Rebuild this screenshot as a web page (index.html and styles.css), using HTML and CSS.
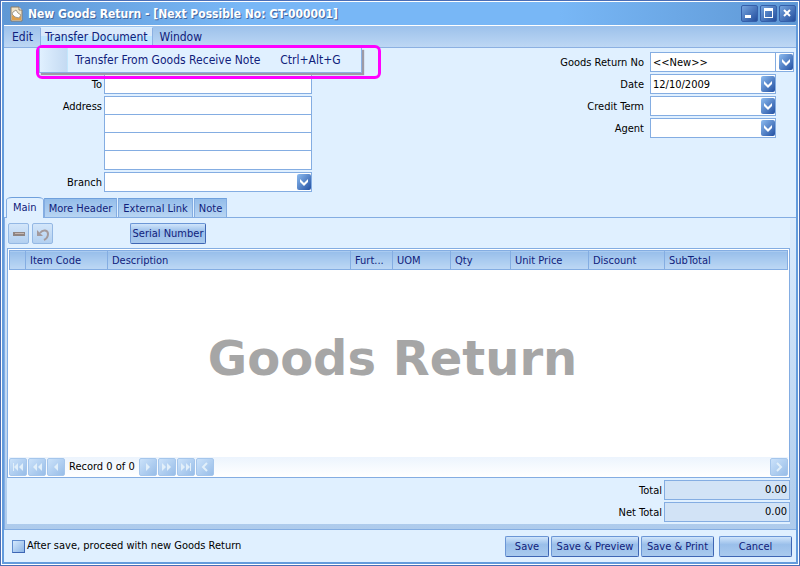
FILE: index.html
```
<!DOCTYPE html>
<html lang="en">
<head>
    <meta charset="UTF-8">
    <meta name="viewport" content="width=device-width, initial-scale=1.0">
    <title>New Goods Return</title>
    <link rel="stylesheet" href="styles.css">
</head>
<body>
    <svg class="defs" aria-hidden="true">
        <linearGradient id="blue" x1="0" y1="0" x2="1" y2="1">
            <stop offset="0" stop-color="#8dbcf0"/>
            <stop offset="1" stop-color="#2350a2"/>
        </linearGradient>
        <symbol id="drop" viewBox="0 0 14 16">
            <rect width="14" height="16" rx="2" fill="url(#blue)"/>
            <path d="M3 5l4 4 4-4v3l-4 4-4-4z" fill="#fff"/>
        </symbol>
    </svg>

    <div class="window">
        <header class="title-bar">
            <svg class="app-icon" width="13" height="16" viewBox="0 0 13 16">
                <path d="M1 1h8l3 3v11H1z" fill="#f1e4c8" stroke="#8b7c68"/>
                <path d="M9 1v3h3" fill="#fff" stroke="#8b7c68"/>
                <path d="M2 9l4 2 5-2v5H2z" fill="#dfa04c"/>
                <path d="M3 6l3-2 2 3 3 2-2 3-4-1-3-3z" fill="#fff" stroke="#a39a8a"/>
            </svg>
            <h1>New Goods Return - [Next Possible No: GT-000001]</h1>
            <div class="window-buttons">
                <button aria-label="Minimize"><svg width="16" height="16"><path d="M4 10h6v3H4z" fill="#fff"/></svg></button>
                <button aria-label="Maximize"><svg width="16" height="16"><path d="M4 3h9v10H4zM5 6v6h7V6z" fill="#fff" fill-rule="evenodd"/></svg></button>
                <button aria-label="Close"><svg width="16" height="16"><path d="M5 5l6 6M11 5l-6 6" stroke="#fff" stroke-width="2"/></svg></button>
            </div>
        </header>

        <nav class="menu-bar">
            <button>Edit</button>
            <div class="menu">
                <button class="open">Transfer Document</button>
                <div class="highlight">
                    <div class="popup">
                        <button><span>Transfer From Goods Receive Note</span><span>Ctrl+Alt+G</span></button>
                    </div>
                </div>
            </div>
            <button>Window</button>
        </nav>

        <div class="header-form">
            <div class="supplier">
                <label for="to">To</label>
                <input type="text" id="to">
                <label for="address">Address</label>
                <div class="address">
                    <input type="text" id="address">
                    <input type="text" aria-label="Address line 2">
                    <input type="text" aria-label="Address line 3">
                    <input type="text" aria-label="Address line 4">
                </div>
                <label for="branch">Branch</label>
                <div class="select">
                    <select id="branch"><option></option></select>
                    <svg width="14" height="16"><use href="#drop"/></svg>
                </div>
            </div>
            <div class="document">
                <label for="docNo">Goods Return No</label>
                <div class="select wide">
                    <select id="docNo"><option>&lt;&lt;New&gt;&gt;</option></select>
                    <svg width="14" height="16"><use href="#drop"/></svg>
                </div>
                <label for="date">Date</label>
                <div class="select">
                    <select id="date"><option>12/10/2009</option></select>
                    <svg width="14" height="16"><use href="#drop"/></svg>
                </div>
                <label for="term">Credit Term</label>
                <div class="select">
                    <select id="term"><option></option></select>
                    <svg width="14" height="16"><use href="#drop"/></svg>
                </div>
                <label for="agent">Agent</label>
                <div class="select">
                    <select id="agent"><option></option></select>
                    <svg width="14" height="16"><use href="#drop"/></svg>
                </div>
            </div>
        </div>

        <div class="tabs">
            <button class="active">Main</button>
            <button>More Header</button>
            <button>External Link</button>
            <button>Note</button>
        </div>

        <main class="panel">
            <div class="page">
                <div class="toolbar">
                    <button class="tool" aria-label="Delete row">
                        <svg width="14" height="14"><path d="M1 5h12v4H1z" fill="#8f8583"/><path d="M3 6h9v1H3z" fill="#c5b7b2"/></svg>
                    </button>
                    <button class="tool" aria-label="Undo">
                        <svg width="14" height="14"><path d="M4 6c3-4 8-3 8 1 0 3-2 5-4 6" fill="none" stroke="#a39a9d" stroke-width="2"/><path d="M1 3v6h6z" fill="#a39a9d"/></svg>
                    </button>
                    <button class="button serial">Serial Number</button>
                </div>

                <div class="grid">
                    <table>
                        <colgroup>
                            <col class="c-mark"><col class="c-code"><col class="c-desc"><col class="c-further"><col class="c-uom"><col class="c-qty"><col class="c-price"><col class="c-discount"><col class="c-subtotal">
                        </colgroup>
                        <thead>
                            <tr>
                                <th></th>
                                <th>Item Code</th>
                                <th>Description</th>
                                <th>Furt...</th>
                                <th>UOM</th>
                                <th>Qty</th>
                                <th>Unit Price</th>
                                <th>Discount</th>
                                <th>SubTotal</th>
                            </tr>
                        </thead>
                    </table>
                    <div class="watermark">Goods Return</div>
                    <div class="navigator">
                        <button aria-label="First"><svg width="12" height="10"><path d="M1 1h1v8H1zM6 1v8L2 5zM11 1v8L7 5z"/></svg></button>
                        <button aria-label="Previous page"><svg width="12" height="10"><path d="M6 1v8L2 5zM11 1v8L7 5z"/></svg></button>
                        <button aria-label="Previous"><svg width="12" height="10"><path d="M8 1v8L4 5z"/></svg></button>
                        <span>Record 0 of 0</span>
                        <button aria-label="Next"><svg width="12" height="10"><path d="M4 1v8l4-4z"/></svg></button>
                        <button aria-label="Next page"><svg width="12" height="10"><path d="M1 1v8l4-4zM6 1v8l4-4z"/></svg></button>
                        <button aria-label="Last"><svg width="12" height="10"><path d="M1 1v8l4-4zM6 1v8l4-4zM10 1h1v8h-1z"/></svg></button>
                        <button aria-label="Scroll left"><svg width="12" height="10"><path class="arrow" d="M8 1L4 5l4 4"/></svg></button>
                        <button class="scroll-right" aria-label="Scroll right"><svg width="12" height="10"><path class="arrow" d="M4 1l4 4-4 4"/></svg></button>
                    </div>
                </div>

                <div class="totals">
                    <label for="total">Total</label>
                    <input type="text" id="total" value="0.00" readonly>
                    <label for="netTotal">Net Total</label>
                    <input type="text" id="netTotal" value="0.00" readonly>
                </div>
            </div>
        </main>

        <footer class="actions">
            <input type="checkbox" id="proceed">
            <label for="proceed">After save, proceed with new Goods Return</label>
            <button class="button save">Save</button>
            <button class="button preview">Save &amp; Preview</button>
            <button class="button print">Save &amp; Print</button>
            <button class="button cancel">Cancel</button>
        </footer>
    </div>
</body>
</html>
```
FILE: styles.css
```
* {
    box-sizing: border-box;
}
body {
    margin: 0;
    font-family: Tahoma, 'DejaVu Sans Condensed', 'DejaVu Sans', sans-serif;
    font-size: 11px;
    line-height: 14px;
    color: #000;
}
button, input, select {
    font: inherit;
    color: inherit;
    margin: 0;
    padding: 0;
    border: 0;
    border-radius: 0;
}
button {
    background: none;
    color: #10217b;
    white-space: nowrap;
}
svg {
    display: block;
}
.defs {
    position: absolute;
    width: 0;
    height: 0;
}

/* window frame */
.window {
    display: flex;
    flex-direction: column;
    min-height: 100vh;
    padding: 2px 4px 3px;
    border: 1px solid #4a6db5;
    background: #e0f0ff;
    box-shadow: inset 0 0 0 1px #fff, inset 0 0 0 3px #639bdc;
}
.title-bar {
    display: flex;
    align-items: center;
    height: 23px;
    margin: -1px -2px 0;
    padding: 0 1px 0 7px;
    background: linear-gradient(90deg, #5f98d5, #78b7f6 30%, #78b7f6 70%, #5f98d5);
}
.title-bar h1 {
    flex: 1;
    margin: 0 0 0 5px;
    font-size: 12px;
    line-height: 16px;
    color: #fff;
    text-shadow: 1px 1px 0 #44669c;
    white-space: nowrap;
}
.window-buttons {
    display: flex;
    gap: 2px;
}
.window-buttons button {
    width: 17px;
    height: 17px;
    border: 1px solid #3560ab;
    border-radius: 2px;
    background: linear-gradient(135deg, #75a4df, #234e9d);
}
.window-buttons svg {
    margin: -1px 0 0 -1px;
}

/* menu */
.menu-bar {
    display: flex;
    height: 23px;
    padding: 1px 0 0 1px;
    margin: 0 -1px;
    border-top: 1px solid #fff;
    border-bottom: 1px solid #8bb0e2;
    background: linear-gradient(#9cc1eb, #bdd7f4);
}
.menu-bar button {
    height: 19px;
    padding: 0 7px;
    font-size: 12px;
}
.menu {
    position: relative;
}
.menu-bar .open {
    padding: 0 4px;
    border: 1px solid #8bb0e2;
    border-top-color: #d9efff;
    background: linear-gradient(#d9e9fb 45%, #bfe5ff 45%);
}
.highlight {
    position: absolute;
    z-index: 1;
    top: 18px;
    left: -4px;
    width: 345px;
    height: 34px;
    border: 3px solid #f0f;
    border-radius: 6px;
}
.popup {
    width: 323px;
    height: 25px;
    border: 1px solid #8bb0e2;
    border-top: 0;
    background: linear-gradient(90deg, #e0f0ff, #c4daf2 27px, #c2e6fc 27px, #c2e6fc 28px, #e0f0ff 28px);
    box-shadow: 2px 2px 1px #9d9aa6;
}
.popup button {
    display: flex;
    gap: 20px;
    padding: 5px 0 0 35px;
}

/* document header */
.header-form {
    display: flex;
    justify-content: space-between;
    padding: 4px 1px 5px 0;
}
.supplier, .document {
    display: grid;
    gap: 2px;
    align-content: start;
}
.supplier {
    grid-template-columns: 97px 208px;
    padding-top: 22px;
}
.supplier label, .document label {
    padding-top: 1px;
    line-height: 19px;
    text-align: right;
}
.document {
    grid-template-columns: 100px 144px;
    column-gap: 6px;
}
.supplier input, .select select {
    width: 100%;
    height: 20px;
    padding: 1px 2px 0;
    border: 1px solid #84ade2;
    background: #fff;
    appearance: none;
}
.address {
    display: flex;
    flex-direction: column;
}
.address input:not(:last-child) {
    margin-bottom: -2px;
}
.select {
    display: grid;
    align-items: center;
    justify-items: end;
}
.select > * {
    grid-area: 1 / 1;
}
.select svg {
    margin-right: 1px;
    pointer-events: none;
}
.document .select {
    width: 126px;
}
.document .wide {
    width: 144px;
}
.wide select {
    background: linear-gradient(#84ade2, #84ade2) right 17px top / 1px 100% no-repeat #fff;
}

/* tabs */
.tabs {
    position: relative;
    display: flex;
    align-items: flex-end;
    gap: 1px;
    margin-bottom: -1px;
    padding-left: 1px;
}
.tabs button {
    height: 20px;
    padding: 1px 4px 0;
    border: 1px solid #84ade2;
    border-top-color: #6fa0dc;
    background: linear-gradient(#94bdea, #b8d5f3);
}
.tabs .active {
    height: 21px;
    padding: 0 6px;
    margin-right: -1px;
    border-bottom: 0;
    border-radius: 6px 6px 0 0 / 3px 3px 0 0;
    background: #e0f0ff;
}
.panel {
    flex: 1;
    display: flex;
    margin: 0 -1px;
    padding: 0 6px 5px 2px;
    border: 1px solid #84ade2;
    border-width: 1px 0 1px 1px;
    background: linear-gradient(#dcecfd, #aecbec);
}
.page {
    flex: 1;
    display: flex;
    flex-direction: column;
    background: #e0f0ff;
}
.toolbar {
    display: flex;
    gap: 3px;
    padding: 5px 1px 4px;
}
.button, .tool {
    height: 21px;
    border: 1px solid #6b96d6;
    border-right-color: #3e66b4;
    border-bottom-color: #3e66b4;
    border-radius: 2px;
    background: linear-gradient(#d0e5fb, #9abfea 40%, #a9caee);
}
.button {
    padding-top: 1px;
}
.tool {
    display: grid;
    place-items: center;
    width: 21px;
    border-color: #94b8e4;
    background: linear-gradient(#d3e6fa, #b3d0f0);
}
.serial {
    width: 76px;
    margin-left: 74px;
}

/* item grid */
.grid {
    flex: 1;
    display: flex;
    flex-direction: column;
    padding: 1px;
    border: 1px solid #84ade2;
    background: #fff;
}
.grid table {
    width: 100%;
    table-layout: fixed;
    border-collapse: collapse;
}
.grid th {
    height: 19px;
    padding: 2px 4px 0;
    border: 1px solid #84ade2;
    background: linear-gradient(#97beea, #bdd8f5);
    color: #10217b;
    font-weight: normal;
    text-align: left;
    white-space: nowrap;
}
.c-mark { width: 16px; }
.c-code { width: 82px; }
.c-desc { width: auto; }
.c-further { width: 42px; }
.c-uom { width: 58px; }
.c-qty { width: 60px; }
.c-price { width: 78px; }
.c-discount { width: 76px; }
.c-subtotal { width: 123px; }
.watermark {
    flex: 1;
    display: grid;
    place-items: center;
    padding: 0 12px 12px 0;
    font-family: 'DejaVu Sans', sans-serif;
    font-size: 48px;
    line-height: 56px;
    font-weight: bold;
    color: #a6a6a6;
}
.navigator {
    display: flex;
    align-items: center;
    gap: 1px;
    height: 19px;
    background: linear-gradient(#ecf4fd, #fff);
}
.navigator span {
    padding: 1px 3px 0;
}
.navigator button {
    display: grid;
    place-items: center;
    width: 18px;
    height: 18px;
    border: 1px solid #a5c6ec;
    border-radius: 2px;
    background: linear-gradient(135deg, #cbe2fa, #98bde8);
}
.navigator path {
    fill: #e1effa;
}
.navigator .arrow {
    fill: none;
    stroke: #e1effa;
    stroke-width: 2;
}
.navigator .scroll-right {
    margin-left: auto;
}
.totals {
    display: grid;
    grid-template-columns: auto 126px;
    gap: 2px;
    padding: 2px 0;
    line-height: 20px;
    text-align: right;
}
.totals label {
    padding-top: 1px;
    line-height: 19px;
}
.totals input {
    width: 100%;
    height: 20px;
    padding: 0 2px;
    border: 1px solid #84ade2;
    background: #d2e3f6;
    text-align: right;
}

/* bottom bar */
.actions {
    display: flex;
    align-items: center;
    gap: 2px;
    height: 32px;
    padding: 0 3px 0 7px;
}
.actions input {
    appearance: none;
    width: 13px;
    height: 13px;
    border: 1px solid #5f8bcd;
    border-right-color: #3e66b4;
    border-bottom-color: #3e66b4;
    background: linear-gradient(135deg, #d3e8fd, #8db5e5);
}
.save {
    width: 44px;
    margin-left: auto;
}
.preview { width: 88px; }
.print { width: 73px; }
.cancel {
    width: 73px;
    margin-left: 3px;
}
```
